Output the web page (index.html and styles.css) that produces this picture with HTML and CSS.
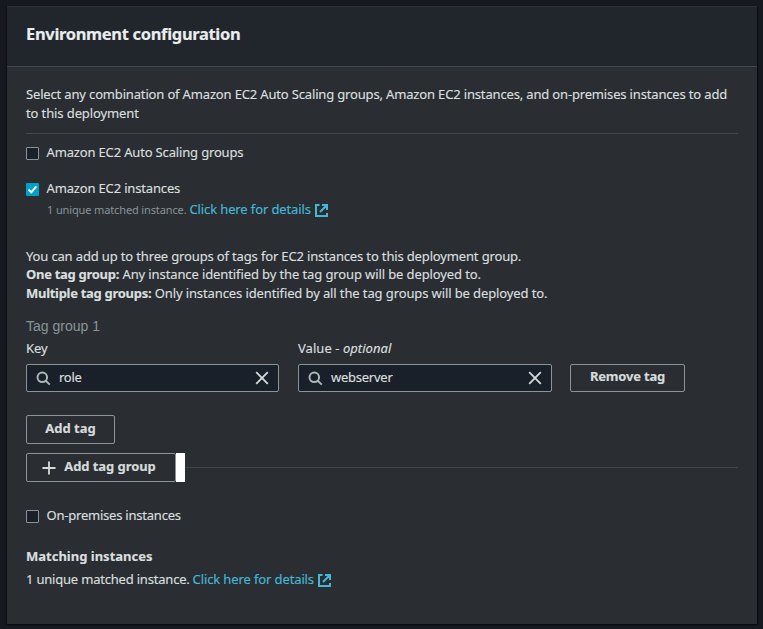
FILE: index.html
```html
<!DOCTYPE html>
<html lang="en">
<head>
<meta charset="utf-8">
<title>Environment configuration</title>
<link rel="stylesheet" href="styles.css">
</head>
<body>
<svg class="sprite" aria-hidden="true">
  <symbol id="search" viewBox="0 0 15 15"><circle cx="6.3" cy="6.3" r="4.8"/><path d="M9.8 9.8 13.8 13.6"/></symbol>
  <symbol id="close" viewBox="0 0 16 16"><path d="M2.2 2.2 13.8 13.8M13.8 2.2 2.2 13.8"/></symbol>
  <symbol id="external" viewBox="0 0 13 13"><path d="M4.5 1H1V12H12V9M7 1H12V6M12 1 5 8"/></symbol>
</svg>
<main class="panel">
  <header class="panel-header"><h1 class="title"><span class="t-title">Environment configuration</span></h1></header>
  <div class="panel-body">
    <p class="intro"><span class="t-intro">Select any combination of Amazon EC2 Auto Scaling groups, Amazon EC2 instances, and on-premises instances to add</span><br><span class="t-intro2">to this deployment</span></p>
    <label class="check first"><span class="box"></span><span class="t-asg">Amazon EC2 Auto Scaling groups</span></label>
    <label class="check second"><span class="box checked"><svg viewBox="0 0 13 13"><path d="M2.5 6.5 5.3 9.3 10.3 3.3"/></svg></span><span class="t-ec2">Amazon EC2 instances</span></label>
    <div class="hint"><span class="small t-small">1 unique matched instance.</span><a class="link"><span class="t-link">Click here for details</span><svg class="ext"><use href="#external"/></svg></a></div>
    <p class="info"><span class="t-you">You can add up to three groups of tags for EC2 instances to this deployment group.</span><br><b class="t-one">One tag group:</b> <span class="t-any">Any instance identified by the tag group will be deployed to.</span><br><b class="t-multi">Multiple tag groups:</b> <span class="t-only">Only instances identified by all the tag groups will be deployed to.</span></p>
    <h2 class="group-name">Tag group 1</h2>
    <div class="tag-row">
      <div class="field key"><span class="field-label t-key">Key</span><div class="input"><svg class="search"><use href="#search"/></svg><span class="value t-role">role</span><svg class="close"><use href="#close"/></svg></div></div>
      <div class="field val"><span class="field-label t-value">Value - <i>optional</i></span><div class="input"><svg class="search"><use href="#search"/></svg><span class="value t-web">webserver</span><svg class="close"><use href="#close"/></svg></div></div>
      <button class="btn remove"><span class="t-remove">Remove tag</span></button>
    </div>
    <button class="btn add"><span class="t-add">Add tag</span></button>
    <div class="group-row"><button class="btn add-group"><svg class="plus" viewBox="0 0 14 14"><path d="M7 .5V13.5M.5 7H13.5"/></svg><span class="t-addgroup">Add tag group</span></button><span class="gap"></span><span class="rule"></span></div>
    <label class="check third"><span class="box"></span><span class="t-onprem">On-premises instances</span></label>
    <h3 class="matching"><span class="t-matching">Matching instances</span></h3>
    <div class="summary"><span class="t-unique">1 unique matched instance.</span><a class="link"><span class="t-link">Click here for details</span><svg class="ext"><use href="#external"/></svg></a></div>
  </div>
</main>
</body>
</html>
```
FILE: styles.css
```css
* { box-sizing: border-box; }
body { margin: 0; padding: 6px 6px 5px 7px; height: 629px; overflow: hidden; background: #16191f; color: #d9dfdf; font: 13px/19px "Noto Sans", "Open Sans", sans-serif; -webkit-text-stroke: .15px; }
h1, h2, h3, p { margin: 0; }
span, b { white-space: nowrap; }
.sprite { display: none; }
.panel { height: 618px; background: #2a2e33; box-shadow: 0 1px 1px #0b0d10, 1px 1px 1px #0b0d10, -1px 0 1px #101317; }
.panel-header { height: 61px; padding: 15px 19px 0; background: #21252c; border-top: 1px solid #2d3034; border-bottom: 1px solid #414750; }
.title { font-size: 16.5px; line-height: 23px; font-weight: 700; color: #eaeded; }
.panel-body { display: flex; flex-direction: column; align-items: flex-start; padding: 18px 19px 0; }
.intro { width: 100%; height: 49px; border-bottom: 1px solid #414750; }
.check { display: flex; align-items: center; gap: 7.5px; height: 19px; }
.first { margin-top: 9px; }
.second { margin-top: 17px; }
.third { margin-top: 24px; }
.box { width: 13px; height: 13px; margin-top: 1px; border: 1px solid #879596; border-radius: 1px; background: #1a2029; }
.checked { border: 0; background: #00a1c9; }
.checked svg { display: block; fill: none; stroke: #fff; stroke-width: 2; }
.hint { display: flex; gap: 3px; padding-left: 21px; margin-top: 2px; height: 19px; }
.small { font-size: 11px; color: #879596; -webkit-text-stroke: 0; }
.link { display: flex; align-items: center; gap: 4px; color: #44b9d6; }
.ext { width: 13px; height: 13px; margin-top: 2px; fill: none; stroke: #44b9d6; stroke-width: 2; }
.info { margin-top: 28px; line-height: 18.45px; height: 56px; }
.group-name { margin-top: 13px; font: 14px/20px "Liberation Sans", sans-serif; color: #879596; -webkit-text-stroke: 0; }
.tag-row { display: flex; align-items: flex-end; margin-top: 3px; }
.field { display: flex; flex-direction: column; gap: 6px; }
.key { width: 253px; margin-right: 19px; }
.val { width: 254px; margin-right: 18px; }
.input { display: flex; align-items: center; height: 28px; padding: 0 8px 0 9px; border: 1px solid #879596; border-radius: 2px; background: #1a2029; }
.value { flex: 1; margin: 0 0 2px 8px; }
.search { width: 15px; height: 15px; fill: none; stroke: #aab7b8; stroke-width: 2; }
.close { width: 16px; height: 16px; fill: none; stroke: #d5dbdb; stroke-width: 1.8; }
.btn { display: flex; align-items: center; justify-content: center; height: 29px; padding: 0 0 3px; background: transparent; border: 1px solid #879596; border-radius: 2px; color: #d5dbdb; font: 700 13px/19px "Noto Sans", "Open Sans", sans-serif; }
.remove { width: 115px; height: 28px; }
.add { width: 89px; margin-top: 23px; }
.group-row { display: flex; align-items: center; width: 100%; margin-top: 9px; }
.add-group { width: 150px; gap: 8px; padding-right: 4px; }
.plus { width: 14px; height: 14px; margin-top: 3px; fill: none; stroke: #d5dbdb; stroke-width: 1.8; }
.gap { width: 9px; height: 29px; background: #fff; }
.rule { flex: 1; height: 1px; background: #414750; }
.matching { margin-top: 22px; font-size: 13px; line-height: 19px; }
.summary { display: flex; gap: 3px; margin-top: 4px; }
.t-title { letter-spacing: -.33px; }
.t-intro { letter-spacing: -.16px; }
.t-intro2 { letter-spacing: -.11px; }
.t-asg, .t-ec2 { letter-spacing: -.16px; }
.t-small { letter-spacing: -.13px; }
.t-link { letter-spacing: -.12px; }
.t-you { letter-spacing: -.15px; }
.t-one { letter-spacing: -.29px; }
.t-multi { letter-spacing: -.29px; }
.t-any, .t-only { letter-spacing: -.11px; }
.t-value { letter-spacing: .05px; }
.t-role, .t-web { letter-spacing: -.25px; }
.t-remove { letter-spacing: -.2px; }
.t-addgroup { letter-spacing: -.07px; }
.t-onprem { letter-spacing: -.22px; }
.t-unique { letter-spacing: -.2px; }
```
